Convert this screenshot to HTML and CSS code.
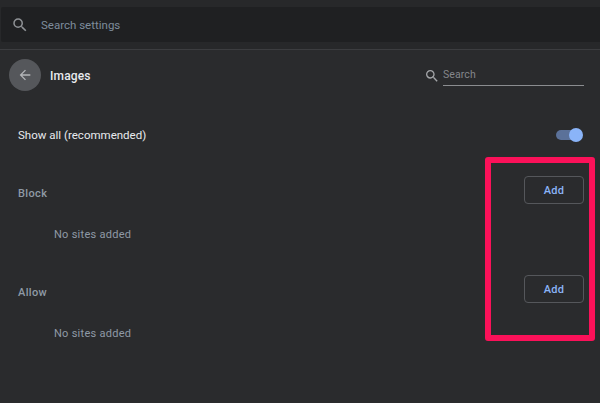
FILE: index.html
```html
<!DOCTYPE html>
<html lang="en">
<head>
<meta charset="utf-8">
<title>Images</title>
<link rel="stylesheet" href="styles.css">
</head>
<body>
<div class="page">
  <div class="topband">
    <div class="searchbar">
      <svg class="search-icon" width="18" height="18" viewBox="0 0 24 24"><path fill="#8f9296" d="M15.5 14h-.79l-.28-.27A6.47 6.47 0 0 0 16 9.5 6.5 6.5 0 1 0 9.5 16c1.61 0 3.09-.59 4.23-1.57l.27.28v.79l5 4.99L20.49 19l-4.99-5zm-6 0C7.01 14 5 11.99 5 9.5S7.01 5 9.5 5 14 7.01 14 9.5 11.99 14 9.5 14z"/></svg>
      <span class="search-text">Search settings</span>
    </div>
  </div>
  <div class="header">
    <div class="back">
      <svg width="16" height="16" viewBox="0 0 24 24"><path fill="#b4b6b9" d="M20 11H7.83l5.59-5.59L12 4l-8 8 8 8 1.41-1.41L7.83 13H20v-2z"/></svg>
    </div>
    <h1 class="title">Images</h1>
    <div class="subsearch">
      <svg width="16" height="16" viewBox="0 0 24 24"><path fill="#a4a6a9" d="M15.5 14h-.79l-.28-.27A6.47 6.47 0 0 0 16 9.5 6.5 6.5 0 1 0 9.5 16c1.61 0 3.09-.59 4.23-1.57l.27.28v.79l5 4.99L20.49 19l-4.99-5zm-6 0C7.01 14 5 11.99 5 9.5S7.01 5 9.5 5 14 7.01 14 9.5 11.99 14 9.5 14z"/></svg>
      <span class="subsearch-field">Search</span>
    </div>
  </div>
  <div class="row-show">
    <span class="show-label">Show all (recommended)</span>
    <span class="toggle"><span class="knob"></span></span>
  </div>
  <section class="site-section section-block">
    <div class="section-head"><span class="section-label">Block</span><button class="add">Add</button></div>
    <p class="empty">No sites added</p>
  </section>
  <section class="site-section section-allow">
    <div class="section-head"><span class="section-label">Allow</span><button class="add">Add</button></div>
    <p class="empty">No sites added</p>
  </section>
  <div class="highlight"></div>
</div>
</body>
</html>
```
FILE: styles.css
```css
* { box-sizing: border-box; }
html, body { margin: 0; padding: 0; }
body { width: 600px; height: 403px; overflow: hidden; background: #2a2b2d; font-family: Roboto, "Liberation Sans", sans-serif; }
.page { position: relative; width: 600px; height: 403px; background: #2a2b2d; }
.topband { height: 50px; background: #27282a; border-bottom: 1px solid #3c3d40; padding: 7px 0 8px 1px; }
.searchbar { height: 35px; background: #1f2022; border-radius: 2px 0 0 2px; display: flex; align-items: center; padding-left: 10px; }
.search-text { margin-left: 12px; font-size: 11.5px; color: #7e8c9c; letter-spacing: 0; }
.header { height: 50px; display: flex; align-items: center; padding: 0 16px 0 9px; }
.back { width: 32px; height: 32px; border-radius: 50%; background: #55575b; display: flex; align-items: center; justify-content: center; }
.title { margin: 2px 0 0 9px; font-size: 12px; font-weight: 500; color: #e8eaed; flex: 1; letter-spacing: .15px; }
.subsearch { display: flex; align-items: center; gap: 3px; margin-top: 2px; }
.subsearch-field { width: 141px; height: 20px; padding-top: 2px; border-bottom: 1px solid #8b8d90; font-size: 10.5px; color: #85878b; letter-spacing: .1px; }
.row-show { display: flex; justify-content: space-between; align-items: center; height: 24px; margin-top: 23px; padding: 0 19px 0 18px; }
.show-label { font-size: 11.5px; color: #e8eaed; letter-spacing: .01px; }
.toggle { position: relative; display: block; width: 25px; height: 10px; border-radius: 5px; background: #5b7199; }
.knob { position: absolute; right: -2px; top: -2px; width: 14px; height: 14px; border-radius: 50%; background: #8ab4f8; }
.site-section { padding: 0 16px 0 18px; }
.section-block { margin-top: 29px; }
.section-allow { margin-top: 33px; }
.section-head { display: flex; justify-content: space-between; align-items: center; height: 28px; }
.section-label { font-size: 11px; font-weight: 500; color: #8f9aa6; letter-spacing: .35px; margin-top: 6px; }
.add { width: 60px; height: 28px; background: transparent; border: 1px solid #55575b; border-radius: 4px; font-family: inherit; font-size: 11px; font-weight: 500; color: #8ab4f8; letter-spacing: .3px; padding: 0; }
.empty { margin: 24px 0 0 36px; height: 14px; line-height: 14px; font-size: 11px; color: #8f9aa6; letter-spacing: .27px; }
.highlight { position: absolute; left: 485px; top: 157px; width: 110px; height: 184px; border: 6px solid #fb1159; border-radius: 3px; }
```
